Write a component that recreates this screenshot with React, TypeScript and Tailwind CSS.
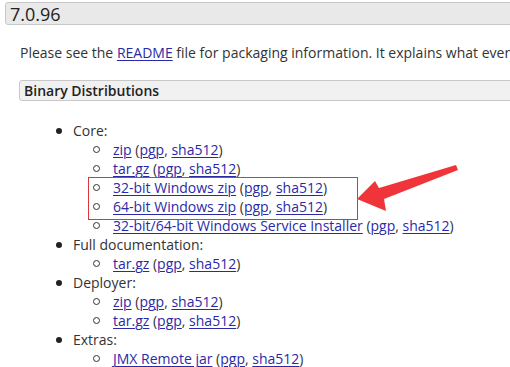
import React from "react";

const A = ({ children }: { children: React.ReactNode }) => (
  <a className="text-[#2a2aa8] underline underline-offset-[2px] decoration-1">{children}</a>
);

const Sub = ({ label }: { label: string }) => (
  <li className="flex items-center h-[19px]">
    <span className="w-[7px] h-[7px] rounded-full border border-[#333] mr-[13px] ml-[93px] shrink-0" />
    <span className="whitespace-nowrap">
      <A>{label}</A> (<A>pgp</A>, <A>sha512</A>)
    </span>
  </li>
);

const Top = ({ label }: { label: string }) => (
  <li className="flex items-center h-[19px]">
    <span className="w-[6px] h-[6px] rounded-full bg-[#222] ml-[56px] mr-[11px] shrink-0" />
    <span>{label}</span>
  </li>
);

export default function App() {
  return (
    <div
      className="relative w-[510px] h-[367px] overflow-hidden bg-white text-[#333] text-[14px]"
      style={{ fontFamily: '"Open Sans", "Noto Sans", sans-serif' }}
    >
      <div className="pt-[2px] pl-[5px]">
        <div className="h-[23px] w-[540px] bg-[#e9e9e9] border border-[#c8c8c8] rounded-[3px] flex items-center pl-[4px] text-[18px] text-[#222] leading-none">
          7.0.96
        </div>
      </div>
      <p className="pl-[20px] mt-[18px] whitespace-nowrap leading-[20px] w-[510px] overflow-hidden">
        Please see the <A>README</A> file for packaging information. It explains what every
      </p>
      <div className="pl-[19px] mt-[17px]">
        <div className="h-[21px] w-[540px] bg-[#f1f1f1] border border-[#c8c8c8] rounded-[3px] flex items-center pl-[4px] text-[14px] font-semibold text-[#222] leading-none">
          Binary Distributions
        </div>
      </div>
      <ul className="mt-[20px]">
        <Top label="Core:" />
        <Sub label="zip" />
        <Sub label="tar.gz" />
        <Sub label="32-bit Windows zip" />
        <Sub label="64-bit Windows zip" />
        <Sub label="32-bit/64-bit Windows Service Installer" />
        <Top label="Full documentation:" />
        <Sub label="tar.gz" />
        <Top label="Deployer:" />
        <Sub label="zip" />
        <Sub label="tar.gz" />
        <Top label="Extras:" />
        <Sub label="JMX Remote jar" />
      </ul>

      <div className="absolute left-[88px] top-[177px] w-[270px] h-[43px] border border-[#d9363e]" />
      <svg className="absolute left-0 top-0" width="510" height="367" viewBox="0 0 510 367">
        <polygon
          points="456,165 379,188 375,181 357,199 386,211 384,199 458,170"
          fill="#f0353a"
        />
      </svg>
    </div>
  );
}
